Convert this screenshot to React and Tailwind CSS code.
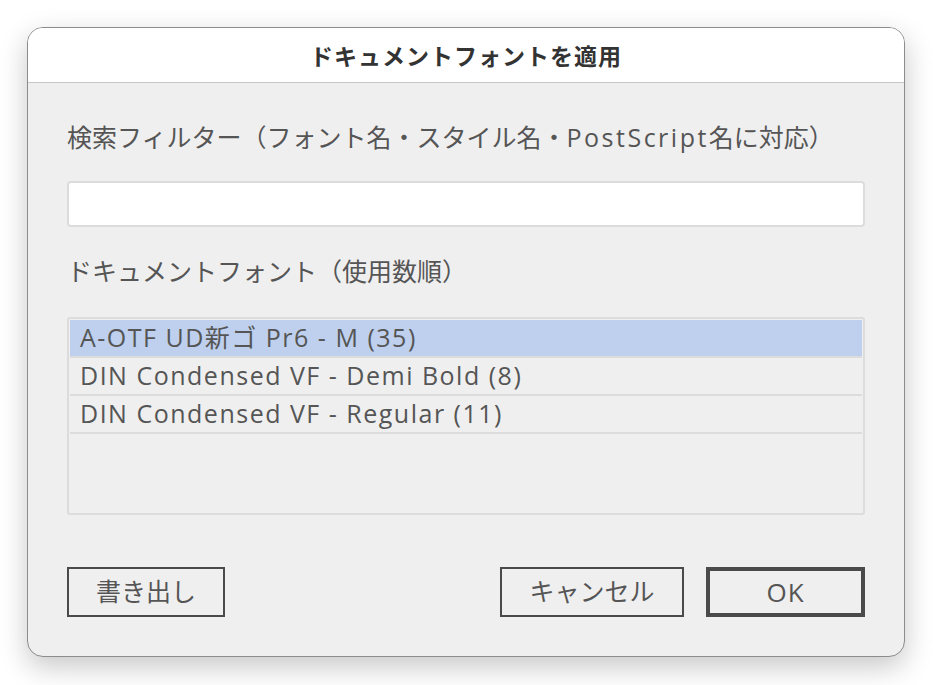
import { useState } from 'react';

const fonts = [
  { name: 'A-OTF UD新ゴ Pr6 - M', count: 35 },
  { name: 'DIN Condensed VF - Demi Bold', count: 8 },
  { name: 'DIN Condensed VF - Regular', count: 11 },
];

export default function App() {
  const [selected, setSelected] = useState(0);
  const [query, setQuery] = useState('');

  return (
    <div className="w-[933px] h-[685px] bg-white pt-[27px] pl-[27px] font-['Open_Sans','Noto_Sans_CJK_JP',sans-serif]">
      <div className="w-[878px] h-[630px] flex flex-col rounded-[16px] border border-[#8c8c8c] bg-[#efefef] overflow-hidden shadow-[0_10px_28px_rgba(0,0,0,0.22)]">
        {/* Title bar */}
        <div className="h-[55px] shrink-0 flex items-center justify-center bg-white border-b border-[#c6c6c6]">
          <h1 className="text-[23px] font-bold text-[#333] tracking-[1px] font-['Noto_Sans_CJK_JP',sans-serif]">ドキュメントフォントを適用</h1>
        </div>

        {/* Body */}
        <div className="flex-1 flex flex-col px-[39px] pt-[38px] text-[#555]">
          <label className="text-[25px] leading-[32px]">
            検索フィルター（フォント名・スタイル名・<span className="tracking-[2.5px]">PostScript</span>名に対応）
          </label>
          <input
            value={query}
            onChange={(e) => setQuery(e.target.value)}
            className="mt-[28px] h-[46px] w-full rounded-[4px] border-2 border-[#dcdcdc] bg-white px-3 text-[22px] outline-none"
          />
          <label className="mt-[28px] text-[25px] leading-[32px]">
            ドキュメントフォント（使用数順）
          </label>
          <div className="mt-[30px] h-[198px] rounded-[3px] border-2 border-[#dcdcdc] p-px">
            {fonts.map((f, i) => (
              <div
                key={i}
                onClick={() => setSelected(i)}
                className={`h-[38px] flex items-center pl-[10px] border-b-2 border-[#dcdcdc] text-[25px] tracking-[1.5px] ${
                  selected === i ? 'bg-[#bed0ed]' : ''
                }`}
              >
                {f.name} ({f.count})
              </div>
            ))}
          </div>

          {/* Buttons */}
          <div className="mt-[52px] flex items-center">
            <button className="w-[158px] h-[50px] border-2 border-[#4a4a4a] text-[25px] text-[#555]">
              書き出し
            </button>
            <div className="flex-1" />
            <button className="w-[184px] h-[50px] border-2 border-[#4a4a4a] text-[25px] text-[#555]">
              キャンセル
            </button>
            <button className="ml-[22px] w-[159px] h-[50px] border-[4px] border-[#4a4a4a] text-[26px] tracking-[1px] text-[#555]">
              OK
            </button>
          </div>
        </div>
      </div>
    </div>
  );
}
